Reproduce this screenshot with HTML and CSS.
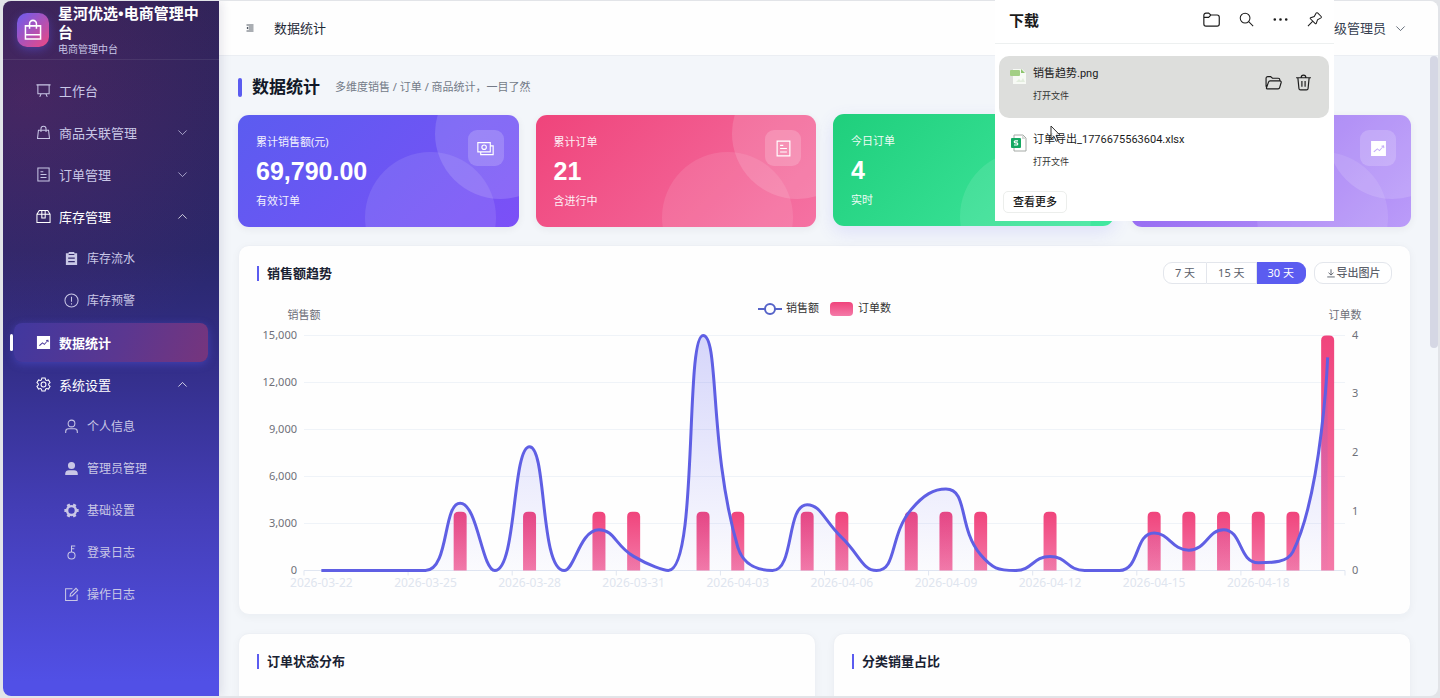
FILE: index.html
```html
<!DOCTYPE html>
<html lang="zh-CN">
<head>
<meta charset="utf-8">
<meta name="viewport" content="width=device-width, initial-scale=1">
<title>数据统计 - 星河优选</title>
<link rel="stylesheet" href="styles.css">
</head>
<body>
<svg class="defs" aria-hidden="true">
  <symbol id="i-bag" viewBox="0 0 16 16"><path d="M2.500 5h11v9.500h-11zM5.500 7V3.500a2.500 2.500 0 0 1 5 0V7M2.500 11.500h11"/></symbol>
  <symbol id="i-goods" viewBox="0 0 16 16"><path d="M2.600 5.500h10.800l1 9H1.600zM5.300 7.500V4a2.700 2.700 0 0 1 5.400 0v3.500"/></symbol>
  <symbol id="i-board" viewBox="0 0 16 16"><path d="M.5 2h15M2 2v9.500h12V2M5.500 11.500 4 14.800M10.500 11.500l1.500 3.300"/></symbol>
  <symbol id="i-doc" viewBox="0 0 16 16"><path d="M2 1h12v14H2zM4.800 5h3M4.800 8h6.400M4.800 11.300h6.400"/></symbol>
  <symbol id="i-box" viewBox="0 0 16 16"><path d="M1 5.500h14v9H1zM1 5.500 3.500 1.500h9L15 5.500M6.200 1.500v8h3.600v-8"/></symbol>
  <symbol id="i-clip" viewBox="0 0 16 16"><path class="solid" fill-rule="evenodd" d="M2 2.500h3V1h6v1.500h3V15H2zM5 4.200h6V3.300H5zM4.500 7v1.200h7V7zM4.500 10.700v1.200h7v-1.200z"/></symbol>
  <symbol id="i-warn" viewBox="0 0 16 16"><circle cx="8" cy="8" r="7"/><path d="M8 4v5.200M8 11v1.300"/></symbol>
  <symbol id="i-trend" viewBox="0 0 16 16"><path class="solid" fill-rule="evenodd" d="M1 1h14v14H1zM3.200 10.900l.8.7 3-2.600 2 1.600 3.300-4 .4 1.200.8-.3-.3-2.500-2.500.4.200.9 1-.1L8.800 9.300l-1.900-1.500z"/></symbol>
  <symbol id="i-gear" viewBox="0 0 16 16"><path d="M6.300 1h3.400l.5 2.100 1.100.6 2-.6L15 6l-1.500 1.400v1.200L15 10l-1.700 2.900-2-.6-1.100.6-.5 2.100H6.300l-.5-2.100-1.100-.6-2 .6L1 10l1.500-1.400V7.400L1 6l1.700-2.900 2 .6 1.100-.6z"/><circle cx="8" cy="8" r="2.600"/></symbol>
  <symbol id="i-user" viewBox="0 0 16 16"><circle cx="8" cy="4.800" r="3.600"/><path d="M1.800 15v-1.500a3 3 0 0 1 3-3h6.400a3 3 0 0 1 3 3V15"/></symbol>
  <symbol id="i-userfill" viewBox="0 0 16 16"><path class="solid" d="M8 1a3.800 3.800 0 1 1 0 7.600A3.800 3.800 0 0 1 8 1zM1.300 14.800v-1.500a4 4 0 0 1 4-3.500h5.400a4 4 0 0 1 4 3.500v1.500z"/></symbol>
  <symbol id="i-tools" viewBox="0 0 16 16"><circle cx="8" cy="8" r="4.700" stroke-width="2.600"/><path stroke-width="3.400" d="M13 8h2.600M.4 8H3M10.500 3.700l1.300-2.300M4.200 14.600l1.300-2.300M5.500 3.700 4.200 1.400M11.800 14.600l-1.300-2.300"/></symbol>
  <symbol id="i-key" viewBox="0 0 16 16"><circle cx="8" cy="11.200" r="3.800"/><path d="M8 7.400V1h4M8 4h3"/></symbol>
  <symbol id="i-edit" viewBox="0 0 16 16"><path d="M9 1.800H1.700v12.700H14V8M6.500 9.800l.4-2.500 5.900-5.900 2 2L8.900 9.300z"/></symbol>
  <symbol id="i-down" viewBox="0 0 16 16"><path d="m2 5 6 6 6-6"/></symbol>
  <symbol id="i-up" viewBox="0 0 16 16"><path d="m2 11 6-6 6 6"/></symbol>
  <symbol id="i-money" viewBox="0 0 16 16"><path d="M.8 2.500h11.700v8.700H.8zM3.500 11.200v2.600h11.700V5.500h-2.700"/><circle cx="6.700" cy="6.800" r="2.100"/></symbol>
  <symbol id="i-menu" viewBox="0 0 16 16"><path d="M1 2h14M6 6h9M6 10h9M1 14h14"/><path class="solid" d="M4.500 5v6L1 8z"/></symbol>
  <symbol id="i-download" viewBox="0 0 16 16"><path d="M8 2v9M4 7.500 8 11.300l4-3.800M2 14.300h12"/></symbol>
  <symbol id="i-folder" viewBox="0 0 16 16"><path d="M.8 4a2 2 0 0 1 2-2h2.500l2 1.800h6a2 2 0 0 1 2 2v6.400a2 2 0 0 1-2 2H2.800a2 2 0 0 1-2-2zM.8 6h4.500l2-2.200"/></symbol>
  <symbol id="i-search" viewBox="0 0 16 16"><circle cx="6.500" cy="6.500" r="5.200"/><path d="m10.300 10.300 4.800 4.800"/></symbol>
  <symbol id="i-more" viewBox="0 0 16 16"><path class="solid" d="M.5 8a1.400 1.400 0 1 0 2.800 0A1.400 1.400 0 0 0 .5 8zM6.600 8a1.400 1.400 0 1 0 2.800 0 1.400 1.400 0 0 0-2.800 0zM12.700 8a1.400 1.400 0 1 0 2.800 0 1.400 1.400 0 0 0-2.800 0z"/></symbol>
  <symbol id="i-pin" viewBox="0 0 16 16"><path d="M9.800 1.100a1 1 0 0 1 1.500-.1l3.800 3.800a1 1 0 0 1-.2 1.500l-3.700 2-1.300 3.800a.7.700 0 0 1-1.100.3L3.600 7.200a.7.700 0 0 1 .3-1.100l3.800-1.300zM6.200 9.800 1 15"/></symbol>
  <symbol id="i-open" viewBox="0 0 16 16"><path d="M1 12V4a1.600 1.600 0 0 1 1.600-1.600h2.700L7 4h5.400A1.600 1.600 0 0 1 14 5.600v.9M1.300 13.200l2-5.600a1.600 1.600 0 0 1 1.500-1.100h9.200a1.200 1.200 0 0 1 1.200 1.500l-1.400 4.800a1.600 1.600 0 0 1-1.500 1.200H2.200a1 1 0 0 1-.9-.8z"/></symbol>
  <symbol id="i-trash" viewBox="0 0 16 16"><path d="M1 3.500h14M5.800 3.300a2.200 2.200 0 0 1 4.400 0M2.700 3.700l1 9.900a1.500 1.500 0 0 0 1.500 1.400h5.600a1.500 1.500 0 0 0 1.500-1.400l1-9.900M6.500 6.500v5.500M9.500 6.500v5.500"/></symbol>
</svg>

<div class="shell">
  <aside class="sidebar">
    <div class="brand">
      <span class="brand-logo"><svg class="icon icon-lg"><use href="#i-bag"/></svg></span>
      <div>
        <div class="brand-name">星河优选•电商管理中台</div>
        <div class="brand-sub">电商管理中台</div>
      </div>
    </div>
    <nav class="menu">
      <a href="#" class="item"><svg class="icon"><use href="#i-board"/></svg>工作台</a>
      <a href="#" class="item"><svg class="icon"><use href="#i-goods"/></svg>商品关联管理<svg class="icon arrow"><use href="#i-down"/></svg></a>
      <a href="#" class="item"><svg class="icon"><use href="#i-doc"/></svg>订单管理<svg class="icon arrow"><use href="#i-down"/></svg></a>
      <a href="#" class="item open"><svg class="icon"><use href="#i-box"/></svg>库存管理<svg class="icon arrow"><use href="#i-up"/></svg></a>
      <a href="#" class="item sub"><svg class="icon"><use href="#i-clip"/></svg>库存流水</a>
      <a href="#" class="item sub"><svg class="icon"><use href="#i-warn"/></svg>库存预警</a>
      <a href="#" class="item active" aria-current="page"><svg class="icon"><use href="#i-trend"/></svg>数据统计</a>
      <a href="#" class="item open"><svg class="icon"><use href="#i-gear"/></svg>系统设置<svg class="icon arrow"><use href="#i-up"/></svg></a>
      <a href="#" class="item sub"><svg class="icon"><use href="#i-user"/></svg>个人信息</a>
      <a href="#" class="item sub"><svg class="icon"><use href="#i-userfill"/></svg>管理员管理</a>
      <a href="#" class="item sub"><svg class="icon"><use href="#i-tools"/></svg>基础设置</a>
      <a href="#" class="item sub"><svg class="icon"><use href="#i-key"/></svg>登录日志</a>
      <a href="#" class="item sub"><svg class="icon"><use href="#i-edit"/></svg>操作日志</a>
    </nav>
  </aside>

  <div class="main">
    <header class="topbar">
      <button class="plain collapse" aria-label="折叠菜单"><svg class="icon"><use href="#i-menu"/></svg></button>
      <span class="crumb">数据统计</span>
      <button class="plain account">超级管理员<svg class="icon"><use href="#i-down"/></svg></button>
    </header>

    <main class="content">
      <div class="page-head">
        <h1>数据统计</h1>
        <p>多维度销售 / 订单 / 商品统计，一目了然</p>
      </div>

      <section class="stats">
        <article class="stat indigo">
          <span class="stat-label">累计销售额(元)</span><strong>69,790.00</strong><span class="stat-note">有效订单</span>
          <span class="badge"><svg class="icon icon-md"><use href="#i-money"/></svg></span>
        </article>
        <article class="stat pink">
          <span class="stat-label">累计订单</span><strong>21</strong><span class="stat-note">含进行中</span>
          <span class="badge"><svg class="icon icon-md"><use href="#i-doc"/></svg></span>
        </article>
        <article class="stat green raised">
          <span class="stat-label">今日订单</span><strong>4</strong><span class="stat-note">实时</span>
        </article>
        <article class="stat violet">
          <span class="badge"><svg class="icon icon-md"><use href="#i-trend"/></svg></span>
        </article>
      </section>

      <section class="panel">
        <div class="panel-head">
          <h2>销售额趋势</h2>
          <div class="tools">
            <div class="segmented">
              <button>7 天</button><button>15 天</button><button class="on" aria-pressed="true">30 天</button>
            </div>
            <button class="export"><svg class="icon"><use href="#i-download"/></svg>导出图片</button>
          </div>
        </div>
        <svg class="chart" id="trend" viewBox="257 292 1135 306" role="img" aria-label="销售额趋势">
          <defs>
            <linearGradient id="g-bar" x1="0" y1="0" x2="0" y2="1"><stop offset="0" stop-color="#f0447c"/><stop offset="1" stop-color="#f47aa8"/></linearGradient>
            <linearGradient id="g-area" x1="0" y1="0" x2="0" y2="1"><stop offset="0" stop-color="#5b5cf0" stop-opacity=".25"/><stop offset="1" stop-color="#5b5cf0" stop-opacity=".02"/></linearGradient>
          </defs>
          <g class="legend">
            <path d="M758 309h24"/><circle cx="770" cy="309" r="5"/>
            <text x="786" y="312">销售额</text>
            <rect x="830" y="302" width="23" height="14" rx="4"/>
            <text x="858" y="312">订单数</text>
          </g>
          <text class="unit" x="304" y="319">销售额</text>
          <text class="unit" x="1345" y="319">订单数</text>
          <g id="grid"></g><g id="bars"></g>
          <path id="area"/><path id="line"/>
        </svg>
      </section>

      <section class="pair">
        <div class="panel"><div class="panel-head"><h2>订单状态分布</h2></div></div>
        <div class="panel"><div class="panel-head"><h2>分类销量占比</h2></div></div>
      </section>
      <span class="scroll-thumb"></span>
    </main>
  </div>
</div>

<div class="downloads" role="dialog" aria-label="下载">
  <div class="dl-head">
    <h3>下载</h3>
    <button class="plain" aria-label="打开文件夹"><svg class="icon icon-md"><use href="#i-folder"/></svg></button>
    <button class="plain" aria-label="搜索"><svg class="icon"><use href="#i-search"/></svg></button>
    <button class="plain" aria-label="更多"><svg class="icon"><use href="#i-more"/></svg></button>
    <button class="plain" aria-label="固定"><svg class="icon"><use href="#i-pin"/></svg></button>
  </div>
  <div class="dl-item hover">
    <svg class="file" viewBox="0 0 18 18"><path d="M4 1h9l4 4v11H4z" fill="#f7faf5"/><path d="M12 1l4 4h-4z" fill="#8cc46c"/><rect x="1" y="2" width="10" height="6" rx="1" fill="#a3cf85"/><path d="M7 14l3-3 2 2 2-3 2 4z" fill="#e3edde"/></svg>
    <div class="dl-text"><span>销售趋势.png</span><a href="#">打开文件</a></div>
    <button class="plain" aria-label="在文件夹中显示"><svg class="icon icon-md"><use href="#i-open"/></svg></button>
    <button class="plain" aria-label="删除"><svg class="icon icon-md"><use href="#i-trash"/></svg></button>
  </div>
  <div class="dl-item">
    <svg class="file" viewBox="0 0 18 18"><path d="M5 1h9l3 3v13H5z" fill="#fff" stroke="#a5aaa6"/><path d="M13 1l4 4h-4z" fill="#d5dad6"/><rect x="2" y="4" width="10" height="10" rx="1" fill="#15a862"/><path d="M9 6.800H6.300a1 1 0 0 0 0 2.100h1.400a1 1 0 0 1 0 2.100H5" fill="none" stroke="#fff" stroke-width="1.200"/></svg>
    <div class="dl-text"><span>订单导出_1776675563604.xlsx</span><a href="#">打开文件</a></div>
  </div>
  <button class="dl-more">查看更多</button>
</div>
<svg class="cursor" viewBox="0 0 12 18" aria-hidden="true"><path d="M1 1v13l3-2.700 2.200 5 2-.9L6 10.500h4.300z"/></svg>
<script src="chart.js"></script>
</body>
</html>
```
FILE: styles.css
```css
* { box-sizing: border-box; }
body {
  margin: 0;
  height: 100vh;
  padding: 1px 2px 2px 3px;
  overflow: hidden;
  background: #e2e4e8;
  color: #1f2937;
  font-family: "Noto Sans", "Noto Sans CJK SC", sans-serif;
  font-size: 13px;
  line-height: 18px;
}
h1, h2, h3, p { margin: 0; }
a { color: inherit; text-decoration: none; }
button { font: inherit; color: inherit; cursor: pointer; }
.plain { display: flex; align-items: center; padding: 0; border: 0; background: none; }
.defs { position: absolute; width: 0; height: 0; }
.icon { width: 15px; height: 15px; flex: none; fill: none; stroke: currentColor; stroke-width: 1.1; }
.icon-md { width: 17px; height: 17px; }
.icon-lg { width: 22px; height: 22px; }
.solid { fill: currentColor; stroke: none; }

.shell { display: flex; height: 100%; border-radius: 8px; overflow: hidden; background: #f3f6fa; }

/* Sidebar */
.sidebar {
  position: relative;
  z-index: 1;
  flex: none;
  width: 216px;
  color: #c9c7e6;
  background:
    radial-gradient(circle at 10% 14%, rgba(200, 50, 110, .17), transparent 260px),
    linear-gradient(180deg, #2d2359 0%, #29276a 36%, #332e88 52%, #453fba 75%, #5150e6 98%);
  box-shadow: 2px 0 10px rgba(30, 27, 75, .12);
}
.brand {
  display: flex;
  align-items: center;
  gap: 9px;
  height: 59px;
  padding: 0 14px;
  border-bottom: 1px solid rgba(255, 255, 255, .08);
}
.brand-logo {
  display: grid;
  place-items: center;
  flex: none;
  width: 32px;
  height: 34px;
  border-radius: 10px;
  color: #fff;
  background: linear-gradient(135deg, #6b5cf0, #ec4882);
  box-shadow: 0 3px 10px rgba(91, 92, 240, .4);
}
.brand-name { color: #fff; font-size: 15px; font-weight: 700; line-height: 19px; }
.brand-sub { font-size: 10px; line-height: 15px; }
.menu { display: flex; flex-direction: column; gap: 3px; padding: 11px 11px 0; }
.item {
  position: relative;
  display: flex;
  align-items: center;
  gap: 8px;
  height: 39px;
  padding: 0 20px 0 22px;
  border-radius: 8px;
}
.item.sub { padding-left: 50px; font-size: 12px; }
.item.open { color: #fff; }
.item.active {
  color: #fff;
  font-weight: 700;
  background: linear-gradient(110deg, #41389f, #5b3790 55%, #76357d);
  box-shadow: 0 2px 9px rgba(91, 92, 240, .4);
}
.item.active::before {
  content: "";
  position: absolute;
  left: -4px;
  top: 11px;
  width: 3px;
  height: 17px;
  border-radius: 2px;
  background: #fff;
}
.arrow { width: 11px; height: 11px; margin-left: auto; }

/* Top bar */
.main { display: flex; flex-direction: column; flex: 1; min-width: 0; }
.topbar {
  display: flex;
  align-items: center;
  flex: none;
  height: 55px;
  padding: 0 32px 0 27px;
  background: #fefefe;
  border-bottom: 1px solid #ebeef3;
}
.collapse .icon { width: 8px; height: 8px; stroke-width: 1.5; }
.crumb { margin-left: 20px; }
.account { gap: 9px; margin-left: auto; color: #374151; }
.account .icon { width: 11px; height: 11px; }

/* Content */
.content { position: relative; flex: 1; min-height: 0; overflow: hidden; padding: 19px 27px 0 19px; display: flex; flex-direction: column; gap: 18px; }
.content > * { flex: none; }
.page-head { display: flex; align-items: center; gap: 15px; height: 24px; }
.page-head h1 { display: flex; align-items: center; gap: 10px; color: #111827; font-size: 17px; line-height: 24px; }
.page-head h1::before { content: ""; width: 4px; height: 19px; border-radius: 2px; background: #5b5cf0; }
.page-head p { color: #747b88; font-size: 11px; }
.stats { display: grid; grid-template-columns: repeat(4, 1fr); gap: 17px; margin-top: -2px; }
.stat {
  position: relative;
  overflow: hidden;
  display: flex;
  flex-direction: column;
  height: 112px;
  padding: 18px;
  border-radius: 11px;
  color: #fff;
  box-shadow: 0 2px 8px rgba(30, 41, 59, .06);
}
.stat::before, .stat::after { content: ""; position: absolute; width: 131px; height: 131px; border-radius: 50%; background: rgba(255, 255, 255, .14); }
.stat::before { top: -47px; right: -47px; }
.stat::after { top: 37px; right: 23px; background: rgba(255, 255, 255, .1); }
.stat-label, .stat-note { font-size: 11px; line-height: 18px; opacity: .92; }
.stat strong { font: 700 25px/30px "Liberation Sans", sans-serif; margin: 5px 0 6px; }
.badge { position: absolute; z-index: 1; top: 15px; right: 15px; display: grid; place-items: center; width: 36px; height: 36px; border-radius: 9px; background: rgba(255, 255, 255, .18); }
.indigo { background: linear-gradient(135deg, #5b5cf0, #7c50f7); }
.pink { background: linear-gradient(135deg, #ef447b, #f572a3); }
.green { background: linear-gradient(135deg, #1fcf7c, #43e8a0); }
.violet { background: linear-gradient(135deg, #8b5cf0, #bb9cf9); }
.raised { transform: translateY(-1px); box-shadow: 0 6px 18px rgba(91, 92, 240, .14); }

.panel { padding: 16px 18px; border: 1px solid #edf0f5; border-radius: 11px; background: #fefefe; box-shadow: 0 2px 8px rgba(30, 41, 59, .04); }
.panel-head { display: flex; align-items: center; justify-content: space-between; height: 22px; }
.panel-head h2 { display: flex; align-items: center; gap: 8px; color: #1a2233; font-size: 13px; }
.panel-head h2::before { content: ""; width: 2px; height: 15px; background: #5b5cf0; }
.tools { display: flex; gap: 8px; color: #5c616b; font-size: 11px; }
.segmented { display: flex; }
.segmented button { height: 22px; padding: 0 11px; border: 1px solid #e3e6ec; border-left-width: 0; background: #fff; line-height: 18px; }
.segmented button:first-child { border-left-width: 1px; border-radius: 9px 0 0 9px; }
.segmented button:last-child { border-radius: 0 9px 9px 0; }
.segmented .on { border-color: #5b5cf0; background: #5b5cf0; color: #fff; }
.export { display: flex; align-items: center; justify-content: center; width: 78px; height: 22px; padding: 0; gap: 1px; border: 1px solid #e3e6ec; border-radius: 9px; background: #fff; font-weight: 500; }
.export .icon { width: 10px; height: 10px; stroke-width: 1.5; }
.chart { display: block; width: 100%; margin-top: 8px; }
.pair { display: grid; grid-template-columns: 1fr 1fr; gap: 17px; }
.pair .panel { height: 370px; }
.scroll-thumb { position: absolute; top: 0; right: 0; width: 8px; height: 292px; border-radius: 4px; background: #d5d7e4; }

/* Chart */
.legend path { stroke: #5563c8; stroke-width: 2; }
.legend circle { fill: #fff; stroke: #5563c8; stroke-width: 2; }
.legend rect { fill: url(#g-bar); }
.legend text { fill: #333; font-size: 11px; }
.unit { fill: #6e7079; font-size: 11px; text-anchor: middle; }
.tick { fill: #6e7079; font-size: 12px; }
.tick-value { font-size: 11px; }
.tick-left { text-anchor: end; }
.tick-date { fill: #dfe5ef; text-anchor: middle; }
.grid-line { stroke: #eff3f8; stroke-width: 1; }
.axis-line { stroke: #e0e6f1; stroke-width: 1; fill: none; }
.bar { fill: url(#g-bar); }
#area { fill: url(#g-area); }
#line { fill: none; stroke: #5f5fe4; stroke-width: 3; stroke-linejoin: bevel; }

/* Downloads popup */
.downloads { position: absolute; z-index: 5; top: 0; right: 106px; width: 339px; height: 221px; background: #fff; color: #1b1b1b; }
.dl-head { display: flex; align-items: center; gap: 19px; height: 44px; padding: 0 12px 4px 14px; border-bottom: 1px solid #edf0f0; }
.dl-head h3 { margin-right: auto; font-size: 15px; font-weight: 700; }
.dl-item { display: flex; gap: 6px; height: 62px; margin: 12px 5px 0 4px; padding: 9px 17px 0 10px; border-radius: 10px; }
.dl-item + .dl-item { margin-top: 4px; }
.dl-item.hover { background: #dddedc; }
.dl-item .plain { height: 34px; margin-left: 7px; }
.file { width: 18px; height: 18px; margin-top: 3px; flex: none; }
.dl-text { display: flex; flex-direction: column; flex: 1; gap: 4px; font-family: Roboto, "Noto Sans CJK SC", sans-serif; font-size: 11px; }
.dl-text a { font-size: 9px; color: #333; }
.dl-more { display: block; height: 22px; margin: 7px 0 0 8px; padding: 0 9px; border: 1px solid #eceeec; border-radius: 5px; background: #fff; font-size: 11px; font-weight: 500; }
.cursor { position: absolute; z-index: 6; left: 1050px; top: 125px; width: 12px; height: 18px; fill: #fff; fill-opacity: .7; stroke: #333; }
```
FILE: chart.js
```js
const NS = 'http://www.w3.org/2000/svg';
const sales = [0, 0, 0, 0, 4300, 0, 7900, 0, 2600, 900, 0, 15000, 1500, 0, 4200, 2100, 0, 3900, 5200, 1000, 0, 900, 0, 0, 2400, 1300, 2600, 500, 1200, 13600];
const orders = [0, 0, 0, 0, 1, 0, 1, 0, 1, 1, 0, 1, 1, 0, 1, 1, 0, 1, 1, 1, 0, 1, 0, 0, 1, 1, 1, 1, 1, 4];
const left = 304, right = 1345, base = 570.5, height = 235;
const step = (right - left) / sales.length;
const centre = i => left + step * (i + 0.5);

function add(parent, tag, attrs, text) {
  const el = document.createElementNS(NS, tag);
  for (const k in attrs) el.setAttribute(k, attrs[k]);
  if (text !== undefined) el.textContent = text;
  document.getElementById(parent).appendChild(el);
}

for (let i = 0; i <= 5; i++) {
  const y = base - height * i / 5;
  add('grid', 'path', { d: `M${left} ${y}H${right}`, class: i ? 'grid-line' : 'axis-line' });
  add('grid', 'text', { x: 297, y: y + 3, class: 'tick tick-value tick-left' }, (i * 3000).toLocaleString('en-US'));
}
for (let i = 0; i <= 4; i++) {
  add('grid', 'text', { x: 1352, y: base - height * i / 4 + 3, class: 'tick tick-value' }, i);
}
for (let i = 0; i <= 30; i += 3) {
  add('grid', 'path', { d: `M${left + step * i} ${base}v5`, class: 'axis-line' });
  if (i < 30) {
    const date = new Date(Date.UTC(2026, 2, 22 + i)).toISOString().slice(0, 10);
    add('grid', 'text', { x: centre(i), y: 587, class: 'tick tick-date' }, date);
  }
}
orders.forEach((n, i) => {
  if (!n) return;
  const x = centre(i) - 6.5, y = base - height * n / 4;
  add('bars', 'path', { d: `M${x} ${base}V${y + 5}q0-5 5-5h3q5 0 5 5V${base}z`, class: 'bar' });
});

/* Smoothed curve whose control points never leave the range of their neighbours. */
const pts = sales.map((v, i) => [centre(i), base - height * v / 15000]);
const clamp = (v, a, b) => Math.max(Math.min(v, Math.max(a, b)), Math.min(a, b));
let out = pts[0];
let d = `M${pts[0].join(' ')}`;
for (let i = 1; i < pts.length; i++) {
  const p = pts[i - 1], c = pts[i], n = pts[i + 1];
  let cin = c, next = c;
  if (n) {
    const lp = Math.hypot(c[0] - p[0], c[1] - p[1]);
    const ln = Math.hypot(n[0] - c[0], n[1] - c[1]);
    const r = ln / (ln + lp);
    next = [0, 1].map(k => clamp(c[k] + (n[k] - p[k]) * 0.5 * r, n[k], c[k]));
    cin = [0, 1].map(k => clamp(c[k] - (next[k] - c[k]) * lp / ln, p[k], c[k]));
    next = [0, 1].map(k => c[k] + (c[k] - cin[k]) * ln / lp);
  }
  d += `C${out.join(' ')} ${cin.join(' ')} ${c.join(' ')}`;
  out = next;
}
document.getElementById('line').setAttribute('d', d);
document.getElementById('area').setAttribute('d', `${d}V${base}H${pts[0][0]}z`);
```
